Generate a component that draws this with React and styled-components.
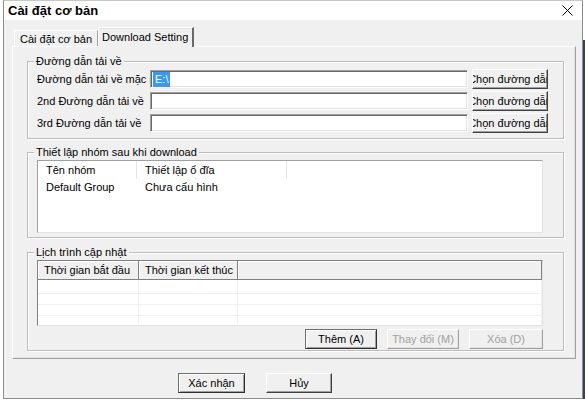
import React from 'react';
import styled, { createGlobalStyle, css } from 'styled-components';

const GlobalStyle = createGlobalStyle`
  html, body {
    margin: 0;
    padding: 0;
    background: #ffffff;
  }
  body {
    font-family: "Liberation Sans", Arial, sans-serif;
    font-size: 11px;
    color: #000;
  }
`;

const Screen = styled.div`
  display: flex;
  width: 585px;
`;

const Window = styled.div`
  margin-left: 3px;
  width: 580px;
  height: 399px;
  box-sizing: border-box;
  border: 1px solid #8c8c8c;
  border-top-color: #c8c8c8;
  display: flex;
  flex-direction: column;
  background: #f0f0f0;
`;

const Backdrop = styled.div`
  flex: 1;
  height: 399px;
  background: linear-gradient(#ffffff 0 40px, #3a4150 40px);
`;

const TitleBar = styled.div`
  height: 19px;
  background: #ffffff;
  display: flex;
  align-items: center;
  justify-content: space-between;
  padding: 0 9px 0 4px;
`;

const Title = styled.div`
  font-weight: bold;
  font-size: 13px;
`;

const CloseButton = styled.div`
  width: 12px;
  height: 12px;
  display: flex;
  align-items: center;
  justify-content: center;
`;

const Client = styled.div`
  flex: 1;
  padding: 7px 0 0 8px;
  display: flex;
  flex-direction: column;
`;

const TabStrip = styled.div`
  display: flex;
  align-items: flex-end;
  height: 19px;
  padding-left: 2px;
  position: relative;
  z-index: 1;
`;

const Tab = styled.div`
  box-sizing: border-box;
  display: flex;
  align-items: center;
  background: #f0f0f0;
  border-top: 1px solid #ffffff;
  border-left: 1px solid #ffffff;
  border-right: 1px solid #a0a0a0;
  ${(p) =>
    p.$active
      ? css`
          height: 20px;
          margin-bottom: -1px;
          padding: 0 4px 2px 3px;
          border-right: 2px solid #696969;
          box-shadow: inset 0 1px 0 #e3e3e3;
        `
      : css`
          height: 16px;
          padding: 0 5px 0 5px;
        `}
`;

const Panel = styled.div`
  width: 564px;
  height: 313px;
  box-sizing: border-box;
  border: 1px solid;
  border-color: #ffffff #a0a0a0 #a0a0a0 #ffffff;
  box-shadow: inset -1px -1px 0 #e3e3e3;
  padding: 14px 11px 0 14px;
  display: flex;
  flex-direction: column;
`;

const Group = styled.div`
  position: relative;
  border: 1px solid #bcbcbc;
  box-shadow: inset 1px 1px 0 #ffffff, 1px 1px 0 #ffffff;
  padding: 7px 20px ${(p) => p.$bottom}px 9px;
  margin-top: ${(p) => p.$gap}px;
`;

const Legend = styled.div`
  position: absolute;
  top: -7px;
  left: 6px;
  padding: 0 2px;
  background: #f0f0f0;
  line-height: 13px;
`;

const Rows = styled.div`
  display: flex;
  flex-direction: column;
  gap: 2px;
`;

const PathRow = styled.div`
  display: flex;
  align-items: center;
  height: 20px;
`;

const RowLabel = styled.div`
  flex: none;
  width: 113px;
  white-space: nowrap;
  overflow: hidden;
`;

const TextBox = styled.div`
  flex: none;
  width: 318px;
  height: 18px;
  box-sizing: border-box;
  background: #ffffff;
  border: 1px solid;
  border-color: #a0a0a0 #ffffff #ffffff #a0a0a0;
  box-shadow: inset 1px 1px 0 #696969, inset -1px -1px 0 #e3e3e3;
  padding: 0 2px;
  display: flex;
  align-items: center;
`;

const Selected = styled.span`
  background: #3399ff;
  color: #ffffff;
  line-height: 15px;
  padding: 0 2px;
`;

const Button = styled.div`
  flex: none;
  box-sizing: border-box;
  width: ${(p) => p.$w}px;
  height: 20px;
  display: flex;
  align-items: center;
  justify-content: center;
  white-space: nowrap;
  overflow: hidden;
  background: #f0f0f0;
  border: 1px solid;
  border-color: #ffffff #404040 #404040 #ffffff;
  box-shadow: inset -1px -1px 0 #a0a0a0;
  color: ${(p) => (p.$disabled ? '#a0a0a0' : '#000')};
  ${(p) =>
    p.$framed &&
    css`
      border-color: #707070 #303030 #303030 #707070;
      box-shadow: inset 1px 1px 0 #ffffff, inset -1px -1px 0 #a0a0a0;
    `}
  ${(p) =>
    p.$disabled &&
    css`
      border-color: #ffffff #a0a0a0 #a0a0a0 #ffffff;
      box-shadow: inset -1px -1px 0 #e3e3e3;
    `}
`;

const PickButton = styled(Button)`
  margin-left: 4px;
`;

const ListBox = styled.div`
  width: 506px;
  height: ${(p) => p.$h}px;
  box-sizing: border-box;
  background: #ffffff;
  border: 1px solid;
  border-color: ${(p) => (p.$dark ? '#808080' : '#a0a0a0')} #e3e3e3 #e3e3e3
    ${(p) => (p.$dark ? '#808080' : '#a0a0a0')};
  overflow: hidden;
`;

const FlatRow = styled.div`
  display: flex;
  height: ${(p) => p.$h}px;
`;

const FlatCell = styled.div`
  box-sizing: border-box;
  width: ${(p) => p.$w}px;
  padding-left: 8px;
  display: flex;
  align-items: center;
  border-right: ${(p) => (p.$sep ? '1px solid #e5e5e5' : 'none')};
`;

const HeaderRow = styled.div`
  display: flex;
  height: 19px;
`;

const HeaderCell = styled.div`
  box-sizing: border-box;
  width: ${(p) => (p.$w ? `${p.$w}px` : 'auto')};
  flex: ${(p) => (p.$w ? 'none' : '1')};
  padding-left: 6px;
  display: flex;
  align-items: center;
  background: #f0f0f0;
  border-right: 1px solid #808080;
  border-bottom: 1px solid #808080;
  box-shadow: inset 1px 1px 0 #ffffff;
`;

const GridRow = styled.div`
  display: flex;
  height: ${(p) => p.$h}px;
  border-bottom: 1px solid #f0f0f0;
  box-sizing: border-box;
`;

const GridCell = styled.div`
  width: ${(p) => (p.$w ? `${p.$w}px` : 'auto')};
  flex: ${(p) => (p.$w ? 'none' : '1')};
  box-sizing: border-box;
  border-right: 1px solid #f0f0f0;
`;

const ActionBar = styled.div`
  display: flex;
  justify-content: flex-end;
  gap: 10px;
  margin-top: 3px;
`;

const Footer = styled.div`
  display: flex;
  gap: 21px;
  margin-top: 14px;
  padding-left: 166px;
`;

function PathField({ label, value }) {
  return (
    <PathRow>
      <RowLabel>{label}</RowLabel>
      <TextBox>{value && <Selected>{value}</Selected>}</TextBox>
      <PickButton $w={76}>Chọn đường dẫn</PickButton>
    </PathRow>
  );
}

export default function App() {
  const scheduleCols = [101, 99];
  const scheduleRows = [14, 11, 11, 11];
  return (
    <>
      <GlobalStyle />
      <Screen>
        <Window>
          <TitleBar>
            <Title>Cài đặt cơ bản</Title>
            <CloseButton>
              <svg width="11" height="11" viewBox="0 0 11 11">
                <path d="M0.5 0.5 L10.5 10.5 M10.5 0.5 L0.5 10.5" stroke="#000" strokeWidth="1" />
              </svg>
            </CloseButton>
          </TitleBar>
          <Client>
            <TabStrip>
              <Tab>Cài đặt cơ bản</Tab>
              <Tab $active>Download Setting</Tab>
            </TabStrip>
            <Panel>
              <Group $gap={0} $bottom={5}>
                <Legend>Đường dẫn tải về</Legend>
                <Rows>
                  <PathField label="Đường dẫn tải về mặc định" value="E:\" />
                  <PathField label="2nd Đường dẫn tải về" />
                  <PathField label="3rd Đường dẫn tải về" />
                </Rows>
              </Group>

              <Group $gap={13} $bottom={4}>
                <Legend>Thiết lập nhóm sau khi download</Legend>
                <ListBox $h={73}>
                  <FlatRow $h={18}>
                    <FlatCell $w={99} $sep>Tên nhóm</FlatCell>
                    <FlatCell $w={150} $sep>Thiết lập ổ đĩa</FlatCell>
                  </FlatRow>
                  <FlatRow $h={16}>
                    <FlatCell $w={99}>Default Group</FlatCell>
                    <FlatCell $w={150}>Chưa cấu hình</FlatCell>
                  </FlatRow>
                </ListBox>
              </Group>

              <Group $gap={14} $bottom={1}>
                <Legend>Lịch trình cập nhật</Legend>
                <ListBox $h={66} $dark>
                  <HeaderRow>
                    <HeaderCell $w={scheduleCols[0]}>Thời gian bắt đầu</HeaderCell>
                    <HeaderCell $w={scheduleCols[1]}>Thời gian kết thúc</HeaderCell>
                    <HeaderCell />
                  </HeaderRow>
                  {scheduleRows.map((h, i) => (
                    <GridRow key={i} $h={h}>
                      <GridCell $w={scheduleCols[0]} />
                      <GridCell $w={scheduleCols[1]} />
                      <GridCell />
                    </GridRow>
                  ))}
                </ListBox>
                <ActionBar>
                  <Button $w={72} $framed>Thêm (A)</Button>
                  <Button $w={72} $disabled>Thay đổi (M)</Button>
                  <Button $w={74} $disabled>Xóa (D)</Button>
                </ActionBar>
              </Group>
            </Panel>
            <Footer>
              <Button $w={67} $framed>Xác nhận</Button>
              <Button $w={66}>Hủy</Button>
            </Footer>
          </Client>
        </Window>
        <Backdrop />
      </Screen>
    </>
  );
}
